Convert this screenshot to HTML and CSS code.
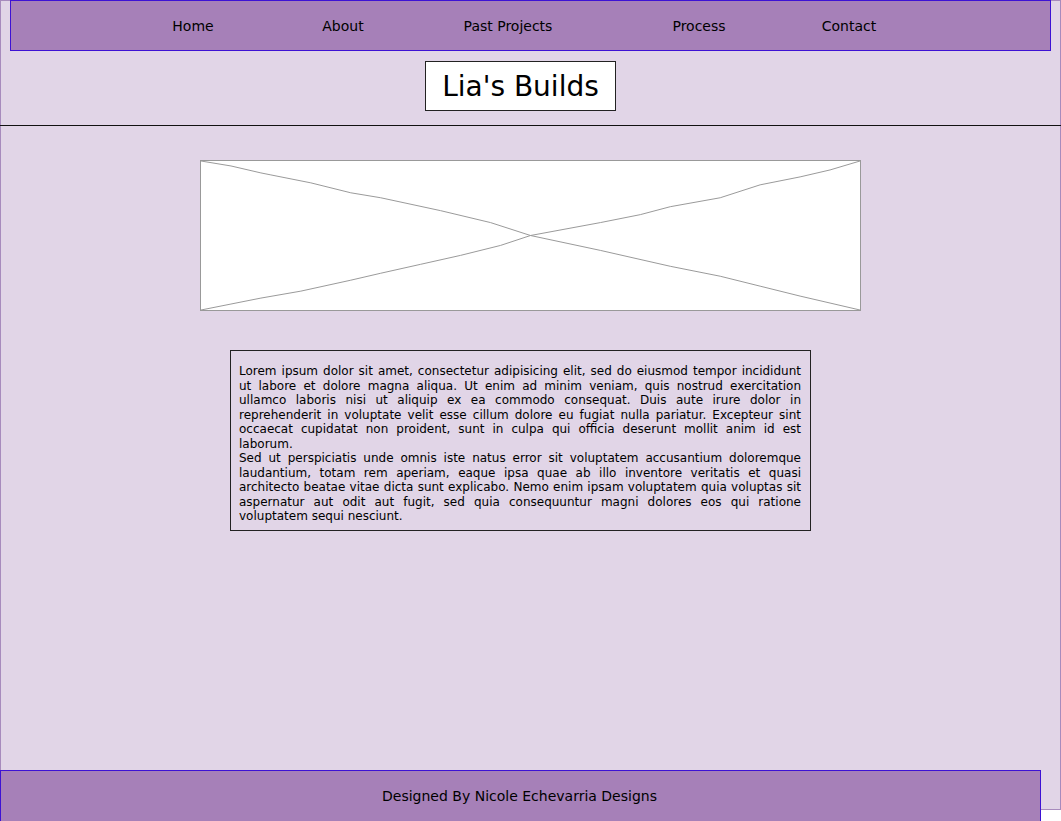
FILE: index.html
```html
<!DOCTYPE html>
<html lang="en">
<head>
<meta charset="utf-8">
<title>Lia's Builds</title>
<link rel="stylesheet" href="styles.css">
</head>
<body>
<div class="frame">
  <nav class="nav">
    <a class="nav-item nav-home">Home</a>
    <a class="nav-item nav-about">About</a>
    <a class="nav-item nav-past">Past Projects</a>
    <a class="nav-item nav-process">Process</a>
    <a class="nav-item nav-contact">Contact</a>
  </nav>
  <header class="title-wrap">
    <h1 class="title">Lia's Builds</h1>
  </header>
  <hr class="rule">
  <div class="hero">
    <svg class="hero-x" viewBox="0 0 660 150" preserveAspectRatio="none" width="660" height="150">
      <path d="M0 0 L30 5 L60 12 L70 14 L110 22 L150 32 L180 37 L240 50 L290 62 L330 75 L400 90 L470 106 L520 116 L560 126 L600 136 L630 143 L660 150" fill="none" stroke="#999" stroke-width="1"/>
      <path d="M0 150 L30 144 L60 138 L100 131 L150 120 L180 113 L220 104 L260 95 L300 85 L330 75 L400 62 L440 54 L470 46 L520 37 L560 24 L600 16 L630 9 L660 0" fill="none" stroke="#999" stroke-width="1"/>
    </svg>
  </div>
  <div class="text-box">
    <p>Lorem ipsum dolor sit amet, consectetur adipisicing elit, sed do eiusmod tempor incididunt ut labore et dolore magna aliqua. Ut enim ad minim veniam, quis nostrud exercitation ullamco laboris nisi ut aliquip ex ea commodo consequat. Duis aute irure dolor in reprehenderit in voluptate velit esse cillum dolore eu fugiat nulla pariatur. Excepteur sint occaecat cupidatat non proident, sunt in culpa qui officia deserunt mollit anim id est laborum.</p>
    <p>Sed ut perspiciatis unde omnis iste natus error sit voluptatem accusantium doloremque laudantium, totam rem aperiam, eaque ipsa quae ab illo inventore veritatis et quasi architecto beatae vitae dicta sunt explicabo. Nemo enim ipsam voluptatem quia voluptas sit aspernatur aut odit aut fugit, sed quia consequuntur magni dolores eos qui ratione voluptatem sequi nesciunt.</p>
  </div>
</div>
<footer class="footer">Designed By Nicole Echevarria Designs</footer>
</body>
</html>
```
FILE: styles.css
```css
html, body {
  margin: 0;
  padding: 0;
  background: #ffffff;
}

body {
  font-family: "DejaVu Sans", Verdana, sans-serif;
  color: #000;
  width: 1061px;
  height: 821px;
  overflow: hidden;
}

.frame {
  box-sizing: border-box;
  width: 1061px;
  height: 810px;
  background: #e1d5e7;
  border: 1px solid #a78bbd;
  display: flex;
  flex-direction: column;
}

.nav {
  box-sizing: border-box;
  margin-left: 9px;
  margin-top: -1px;
  width: 1041px;
  height: 51px;
  background: #a680b8;
  border: 1px solid #3d12d4;
  display: flex;
  align-items: center;
  font-size: 14px;
}

.nav-item {
  width: 100px;
  text-align: center;
  flex: none;
}

.nav-home { margin-left: 132px; }
.nav-about { margin-left: 50px; }
.nav-past { margin-left: 65px; }
.nav-process { margin-left: 91px; }
.nav-contact { margin-left: 50px; }

.title-wrap {
  margin-top: 10px;
  padding-left: 424px;
  display: flex;
}

.title {
  box-sizing: border-box;
  margin: 0;
  width: 191px;
  height: 50px;
  background: #fff;
  border: 1px solid #222;
  font-weight: normal;
  font-size: 28px;
  display: flex;
  align-items: center;
  justify-content: center;
  padding-top: 1px;
}

.rule {
  margin: 14px 0 0 -1px;
  width: 1061px;
  height: 0;
  border: none;
  border-top: 1px solid #111;
}

.hero {
  box-sizing: border-box;
  margin: 34px 0 0 199px;
  width: 661px;
  height: 151px;
  background: #fff;
  border: 1px solid #999;
  flex: none;
}

.hero-x {
  display: block;
  width: 100%;
  height: 100%;
}

.text-box {
  box-sizing: border-box;
  margin: 39px 0 0 229px;
  width: 581px;
  height: 181px;
  border: 1px solid #222;
  padding: 13px 9px 0 8px;
  font-size: 12px;
  line-height: 14.5px;
  text-align: justify;
  flex: none;
}

.text-box p {
  margin: 0;
}

.footer {
  box-sizing: border-box;
  margin-top: -40px;
  width: 1041px;
  height: 51px;
  background: #a680b8;
  border: 1px solid #3d12d4;
  border-bottom: none;
  font-size: 14px;
  display: flex;
  align-items: center;
  justify-content: center;
  padding-right: 2px;
  position: relative;
}
```
